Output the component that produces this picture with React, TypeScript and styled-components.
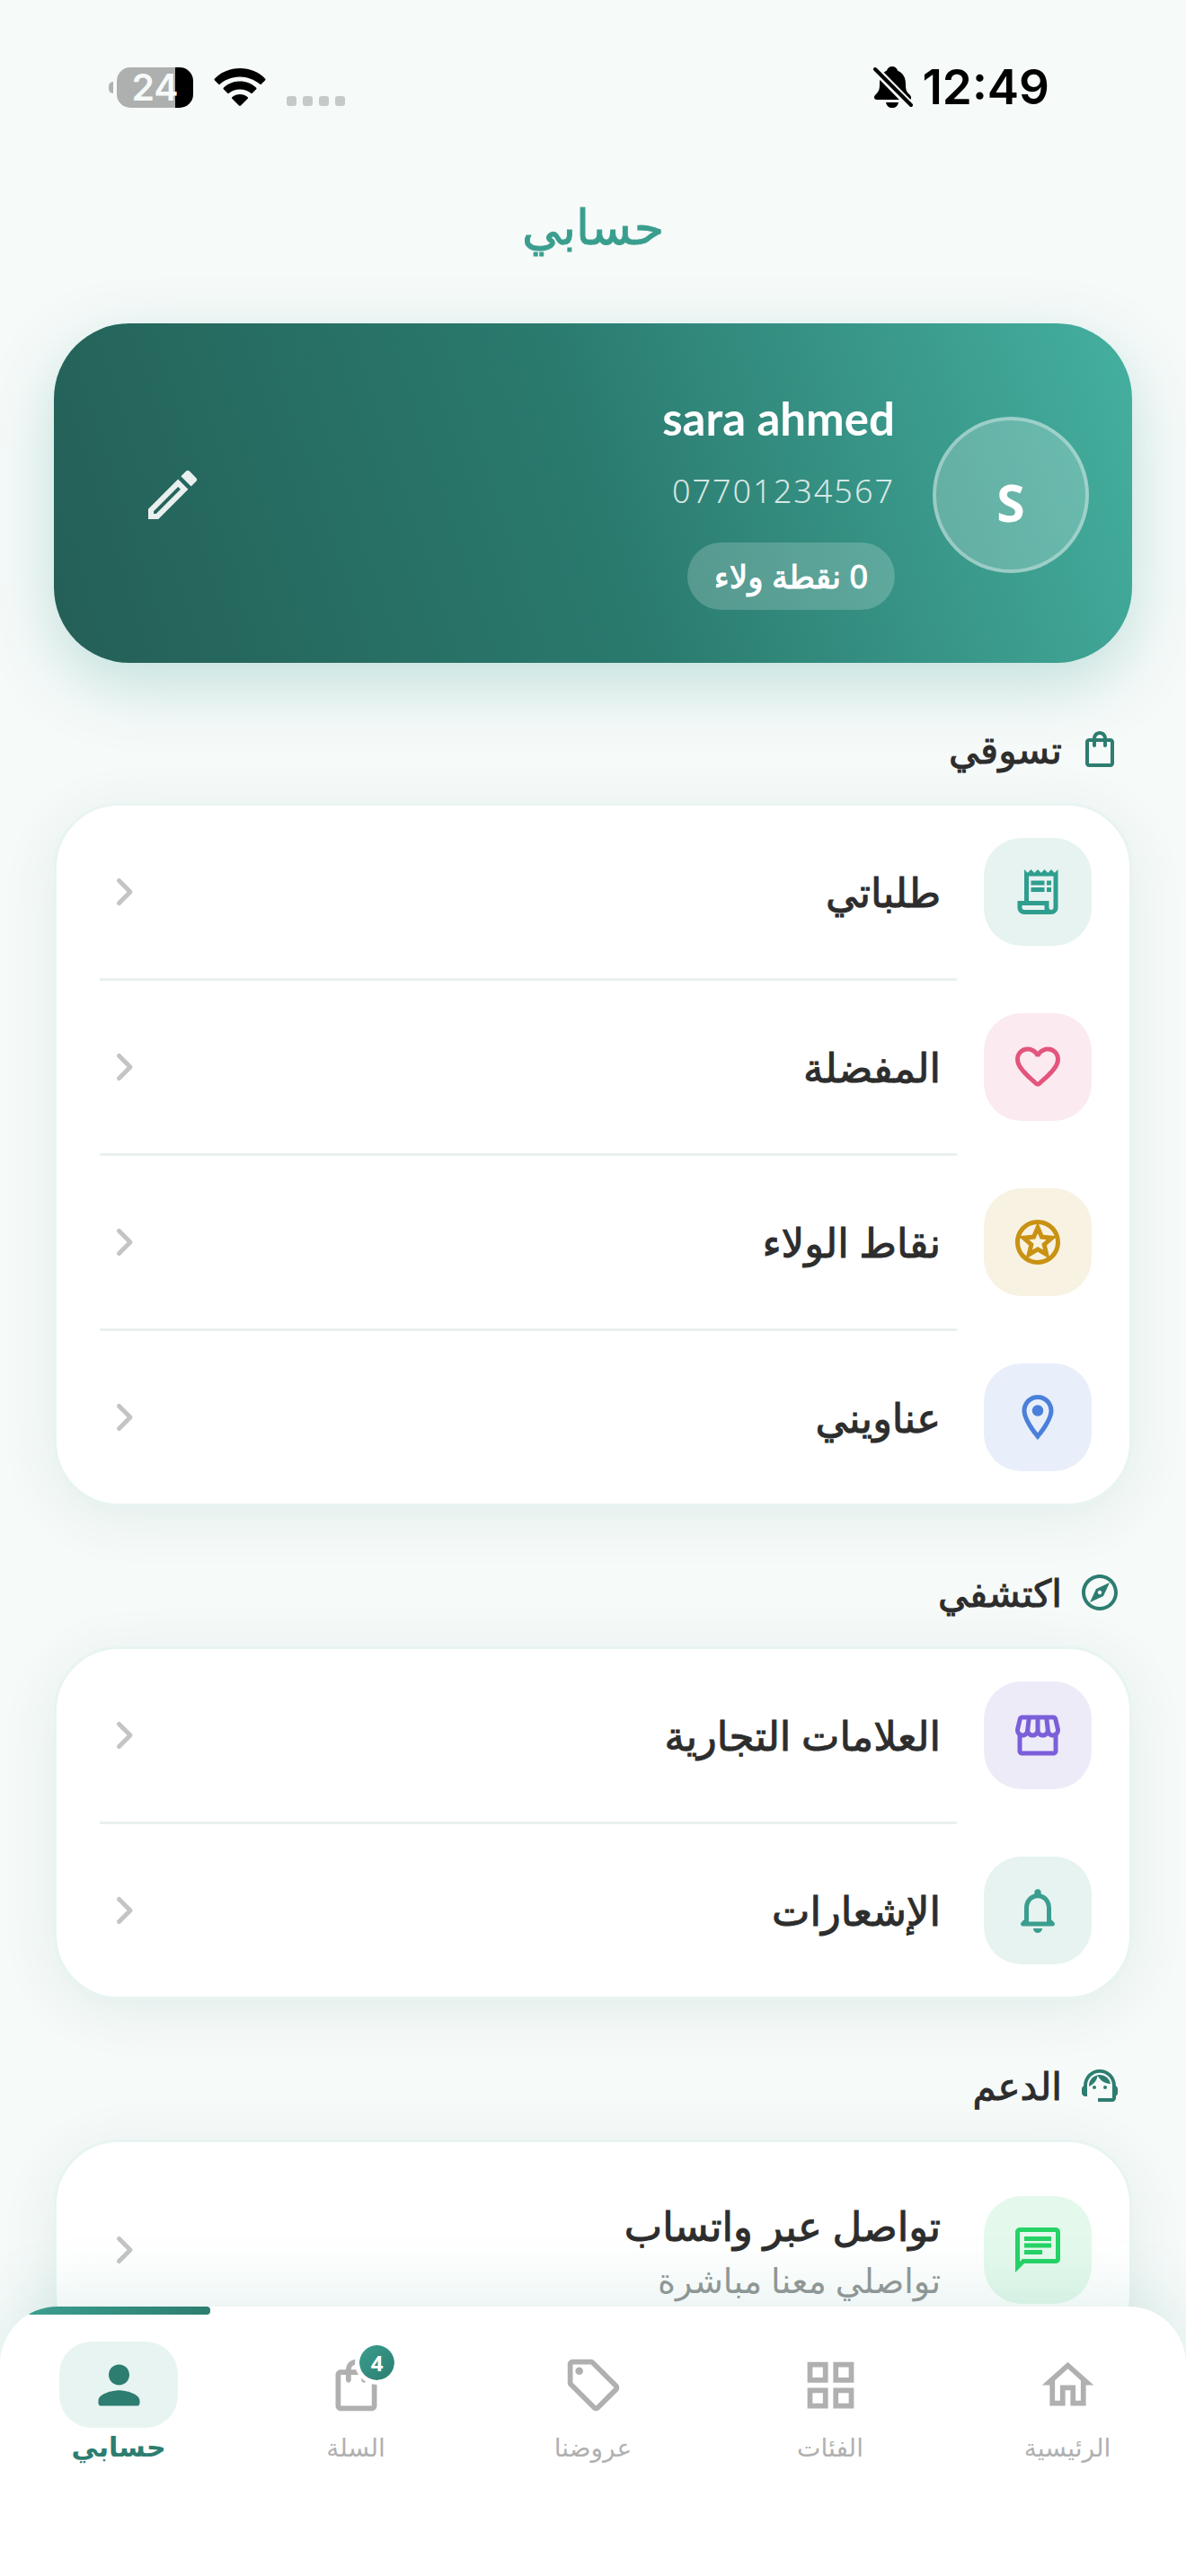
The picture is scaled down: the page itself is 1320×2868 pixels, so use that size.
import React from "react";
import styled, { createGlobalStyle } from "styled-components";
import {
  MdOutlineChat,
  MdOutlineGridView,
  MdOutlineHome,
  MdOutlineLocalOffer,
  MdOutlineModeEdit,
  MdOutlineReceiptLong,
  MdOutlineShoppingBag,
  MdOutlineStars,
  MdOutlineStorefront,
  MdSupportAgent,
} from "react-icons/md";

const GlobalStyle = createGlobalStyle`
  *, *::before, *::after {
    box-sizing: border-box;
  }

  body {
    background: #f6faf9;
    color: #2d2d2d;
    font-family: "Noto Sans", "DejaVu Sans", sans-serif;
    margin: 0;
  }

  button {
    background: none;
    border: none;
    color: inherit;
    cursor: pointer;
    font: inherit;
    padding: 0;
  }

  a {
    color: inherit;
    text-decoration: none;
  }

  svg {
    display: block;
    flex: none;
  }
`;

const Screen = styled.div`
  display: flex;
  flex-direction: column;
  height: 100vh;
  overflow: hidden;
`;

const StatusBar = styled.header`
  align-items: center;
  color: #000;
  direction: ltr;
  display: flex;
  flex: none;
  height: 194px;
  justify-content: space-between;
  padding: 0 152px 0 121px;
`;

const StatusGroup = styled.div<{ $gap: number }>`
  align-items: center;
  display: flex;
  gap: ${({ $gap }) => $gap}px;
`;

const Time = styled.span`
  font-family: Inter, sans-serif;
  font-size: 53px;
  font-weight: 600;
  line-height: 60px;
`;

const Battery = styled.div`
  align-items: center;
  display: flex;
  gap: 4px;
`;

const BatteryTip = styled.span`
  background: #b0b3b1;
  border-radius: 5px 0 0 5px;
  height: 13px;
  width: 5px;
`;

const BatteryLevel = styled.span`
  background: linear-gradient(to left, #000 20px, #adb0ae 20px);
  border-radius: 15px;
  color: #f6faf9;
  font-family: Inter, sans-serif;
  font-size: 41px;
  font-weight: 600;
  line-height: 45px;
  text-align: center;
  width: 85px;
`;

const PageTitle = styled.h1`
  -webkit-text-stroke: 1px;
  color: #3a9e8f;
  flex: none;
  font-size: 54px;
  font-weight: 500;
  line-height: 114px;
  margin: 0 0 52px;
  text-align: center;
`;

const Content = styled.main`
  display: flex;
  flex: 1;
  flex-direction: column;
  min-height: 0;
  padding: 0 60px;
`;

const ProfileCard = styled.section`
  align-items: center;
  background: linear-gradient(252deg, #45b0a0, #2a7a6e 50%, #245f56);
  border-radius: 84px;
  box-shadow: 0 24px 72px rgba(58, 158, 143, 0.28);
  color: #fff;
  display: flex;
  flex: none;
  gap: 42px;
  height: 378px;
  padding: 4px 48px 0;
`;

const Avatar = styled.div`
  align-items: center;
  background: rgba(255, 255, 255, 0.22);
  border: 4px solid rgba(255, 255, 255, 0.35);
  border-radius: 50%;
  display: flex;
  font-size: 57px;
  font-weight: 700;
  height: 174px;
  justify-content: center;
  line-height: 80px;
  padding-top: 16px;
  width: 174px;
`;

const ProfileInfo = styled.div`
  align-items: flex-start;
  display: flex;
  flex: 1;
  flex-direction: column;
`;

const ProfileName = styled.h2`
  font-family: Lato, sans-serif;
  font-size: 51px;
  font-weight: 700;
  line-height: 84px;
  margin: 0;
`;

const Phone = styled.span`
  direction: ltr;
  font-size: 36px;
  font-weight: 300;
  letter-spacing: 2px;
  line-height: 54px;
  margin: 12px 0 30px;
  opacity: 0.8;
`;

const Points = styled.span`
  -webkit-text-stroke: 1px;
  background: rgba(255, 255, 255, 0.2);
  border-radius: 38px;
  font-size: 36px;
  line-height: 75px;
  padding: 0 30px;
`;

const EditButton = styled.button`
  color: rgba(255, 255, 255, 0.9);
  padding: 48px;
`;

const SectionTitle = styled.h3`
  -webkit-text-stroke: 1px;
  align-items: center;
  display: flex;
  flex: none;
  font-size: 42px;
  font-weight: 500;
  gap: 18px;
  line-height: 84px;
  margin: 54px 12px 18px;

  svg {
    color: #2d7d70;
  }
`;

const Card = styled.ul`
  background: #fff;
  border: 3px solid #e8f4f2;
  border-radius: 72px;
  box-shadow: 0 12px 60px rgba(45, 125, 112, 0.1);
  flex: none;
  list-style: none;
  margin: 0;
  padding: 0;
`;

const CardItem = styled.li`
  & + &::before {
    background: #e8f1ee;
    content: "";
    display: block;
    height: 3px;
    margin: 0 192px 0 48px;
  }
`;

const RowLink = styled.a<{ $tall?: boolean }>`
  align-items: center;
  display: flex;
  gap: 48px;
  height: ${({ $tall }) => ($tall ? 240 : 192)}px;
  padding: 0 42px;
`;

const IconTile = styled.span<{ $color: string; $background: string }>`
  align-items: center;
  background: ${({ $background }) => $background};
  border-radius: 42px;
  color: ${({ $color }) => $color};
  display: flex;
  height: 120px;
  justify-content: center;
  width: 120px;
`;

const RowText = styled.span`
  display: flex;
  flex: 1;
  flex-direction: column;
`;

const RowTitle = styled.span`
  -webkit-text-stroke: 1px;
  font-size: 45px;
  line-height: 66px;
`;

const RowSubtitle = styled.span`
  color: #949796;
  font-size: 38px;
  line-height: 54px;
`;

const BottomNav = styled.nav`
  background: #fff;
  border-radius: 64px 64px 0 0;
  box-shadow: 0 -12px 72px rgba(58, 158, 143, 0.14);
  display: flex;
  flex: none;
  height: 300px;
  overflow: hidden;
  position: relative;
`;

const NavLink = styled.a<{ $active?: boolean }>`
  align-items: center;
  color: ${({ $active }) => ($active ? "#2d7d70" : "#b0b0b0")};
  display: flex;
  flex: 1;
  flex-direction: column;
  font-size: ${({ $active }) => ($active ? 30 : 28)}px;
  font-weight: ${({ $active }) => ($active ? 700 : 400)};
  line-height: 42px;
  padding-top: 39px;
  position: relative;
`;

const Indicator = styled.span`
  background: linear-gradient(to right, #3a9e8f, #2d7d70);
  border-radius: 4px;
  height: 9px;
  left: 30px;
  position: absolute;
  right: 30px;
  top: 0;
`;

const NavIcon = styled.span<{ $active?: boolean }>`
  align-items: center;
  background: ${({ $active }) => ($active ? "#e8f4f2" : "transparent")};
  border-radius: 36px;
  display: flex;
  height: 96px;
  justify-content: center;
  position: relative;
  width: 132px;
`;

const Badge = styled.span`
  background: linear-gradient(to bottom right, #3a9e8f, #2d7d70) padding-box;
  border: 5px solid #fff;
  border-radius: 50%;
  color: #fff;
  font-size: 24px;
  font-weight: 700;
  height: 49px;
  line-height: 40px;
  position: absolute;
  right: 18px;
  text-align: center;
  top: -1px;
  width: 49px;
`;

interface GlyphProps {
  size: number;
  children: React.ReactNode;
}

const Glyph = ({ size, children }: GlyphProps) => (
  <svg width={size} height={size} viewBox="0 0 24 24" fill="currentColor">
    {children}
  </svg>
);

const HeartIcon = () => (
  <Glyph size={60}>
    <path d="M19.66 3.99c-2.64-1.8-5.9-.96-7.66 1.1-1.76-2.06-5.02-2.91-7.66-1.1-1.4.96-2.28 2.58-2.34 4.29-.14 3.88 3.3 6.99 8.55 11.76l.1.09c.76.69 1.93.69 2.69-.01l.11-.1c5.25-4.76 8.68-7.87 8.55-11.75-.06-1.7-.94-3.32-2.34-4.28zM12.1 18.55l-.1.1-.1-.1C7.14 14.24 4 11.39 4 8.5 4 6.5 5.5 5 7.5 5c1.54 0 3.04.99 3.57 2.36h1.87C13.46 5.99 14.96 5 16.5 5c2 0 3.5 1.5 3.5 3.5 0 2.89-3.14 5.74-7.9 10.05z" />
  </Glyph>
);

const PinIcon = () => (
  <Glyph size={60}>
    <path d="M12 2C8.13 2 5 5.13 5 9c0 5.25 7 13 7 13s7-7.75 7-13c0-3.87-3.13-7-7-7zM7 9c0-2.76 2.24-5 5-5s5 2.24 5 5c0 2.88-2.88 7.19-5 9.88C9.92 16.21 7 11.85 7 9z" />
    <circle cx="12" cy="9" r="2.5" />
  </Glyph>
);

const BellIcon = () => (
  <Glyph size={60}>
    <path d="M19.29 17.29L18 16v-5c0-3.07-1.63-5.64-4.5-6.32V4c0-.83-.67-1.5-1.5-1.5s-1.5.67-1.5 1.5v.68C7.64 5.36 6 7.92 6 11v5l-1.29 1.29c-.63.63-.19 1.71.7 1.71h13.17c.9 0 1.34-1.08.71-1.71zM16 17H8v-6c0-2.48 1.51-4.5 4-4.5s4 2.02 4 4.5v6zm-4 5c1.1 0 2-.9 2-2h-4c0 1.1.89 2 2 2z" />
  </Glyph>
);

const CompassIcon = () => (
  <Glyph size={48}>
    <path d="M12 2C6.48 2 2 6.48 2 12s4.48 10 10 10 10-4.48 10-10S17.52 2 12 2zm0 18c-4.41 0-8-3.59-8-8s3.59-8 8-8 8 3.590 8 8-3.590 8-8 8zm-5.500-2.500l7.510-3.490L17.500 6.500 9.990 9.990 6.500 17.500zm5.500-6.600c.61 0 1.100.49 1.100 1.100s-.49 1.100-1.100 1.100-1.100-.49-1.100-1.100.49-1.100 1.100-1.100z" />
  </Glyph>
);

const PersonIcon = () => (
  <Glyph size={69}>
    <path d="M12 12c2.21 0 4-1.79 4-4s-1.79-4-4-4-4 1.79-4 4 1.79 4 4 4zm0 2c-2.67 0-8 1.34-8 4v1c0 .55.45 1 1 1h14c.55 0 1-.45 1-1v-1c0-2.66-5.33-4-8-4z" />
  </Glyph>
);

const Chevron = () => (
  <svg width="60" height="60" viewBox="0 0 60 60" fill="none" stroke="#c4c4c4" strokeWidth="5" strokeLinecap="round" strokeLinejoin="round">
    <path d="M27.5 17.5L40 30L27.5 42.5" />
  </svg>
);

const Wifi = () => (
  <svg width="58" height="42" viewBox="0 0 58 42">
    <path d="M29 0C40 0 50 4 57 11.5Q58 12.500 57 13.500L53 17.500Q52 18.500 51 17.500C45 12.500 37 9.500 29 9.500S13 12.500 7 17.500Q6 18.500 5 17.500L1 13.500Q0 12.500 1 11.500C8 4 18 0 29 0Z" />
    <path d="M29 14.500C36 14.500 42 17 47 21.500Q48 22.500 47 23.500L43 27.500Q42 28.500 41 27.500C37.500 24.800 33.500 23.500 29 23.500S20.500 24.800 17 27.500Q16 28.500 15 27.500L11 23.500Q10 22.500 11 21.500C16 17 22 14.500 29 14.500Z" />
    <path d="M29 29C32.500 29 35 30 37.500 32Q38.500 33 37.500 34L30 41.500Q29 42.300 28 41.500L20.500 34Q19.500 33 20.500 32C23 30 25.500 29 29 29Z" />
  </svg>
);

const SignalDots = () => (
  <svg width="66" height="42" viewBox="0 0 66 42" fill="#c5c9c7">
    {[0, 18, 36, 54].map((x) => (
      <rect key={x} x={x} y="31" width="11" height="11" rx="3" />
    ))}
  </svg>
);

const SilentBell = () => (
  <svg width="44" height="48" viewBox="0 0 44 48">
    <path d="M21 1C24 1 26 2.500 27 5.500C33 8.500 36 13 36 21C36 28 37 29 41 33C43 36 42 38 40 38H4C1 38 0 35 2 33C6 29 7 27 7 21C7 13 9 8.500 15 5.500C16 2.500 18 1 21 1Z" />
    <path d="M14 41H28C27 45 25 47 21 47S15 45 14 41Z" />
    <path d="M-1 1L44 47" stroke="#f6faf9" strokeWidth="9" />
    <path d="M2 4L42 44" stroke="#000" strokeWidth="4" strokeLinecap="round" />
  </svg>
);

interface MenuItem {
  title: string;
  subtitle?: string;
  icon: React.ReactNode;
  color: string;
  background: string;
}

interface MenuSection {
  title: string;
  icon: React.ReactNode;
  items: MenuItem[];
}

const sections: MenuSection[] = [
  {
    title: "تسوقي",
    icon: <MdOutlineShoppingBag size={48} />,
    items: [
      { title: "طلباتي", icon: <MdOutlineReceiptLong size={60} />, color: "#2f9e8f", background: "#e6f3f0" },
      { title: "المفضلة", icon: <HeartIcon />, color: "#e3557d", background: "#fbeaf0" },
      { title: "نقاط الولاء", icon: <MdOutlineStars size={60} />, color: "#c99213", background: "#f8f2e3" },
      { title: "عناويني", icon: <PinIcon />, color: "#4a80d9", background: "#e8eefa" },
    ],
  },
  {
    title: "اكتشفي",
    icon: <CompassIcon />,
    items: [
      { title: "العلامات التجارية", icon: <MdOutlineStorefront size={60} />, color: "#7b5fd9", background: "#eeebf9" },
      { title: "الإشعارات", icon: <BellIcon />, color: "#3a9e8f", background: "#e6f3f0" },
    ],
  },
  {
    title: "الدعم",
    icon: <MdSupportAgent size={48} />,
    items: [
      {
        title: "تواصل عبر واتساب",
        subtitle: "تواصلي معنا مباشرة",
        icon: <MdOutlineChat size={60} />,
        color: "#25d366",
        background: "#e4f9ec",
      },
    ],
  },
];

const tabs = [
  { label: "الرئيسية", icon: <MdOutlineHome size={69} /> },
  { label: "الفئات", icon: <MdOutlineGridView size={69} /> },
  { label: "عروضنا", icon: <MdOutlineLocalOffer size={69} /> },
  { label: "السلة", icon: <MdOutlineShoppingBag size={69} />, badge: 4 },
  { label: "حسابي", icon: <PersonIcon />, active: true },
];

const App: React.FunctionComponent = (): JSX.Element => (
  <Screen dir="rtl" lang="ar">
    <GlobalStyle />
    <StatusBar>
      <StatusGroup $gap={23}>
        <Battery>
          <BatteryTip />
          <BatteryLevel>24</BatteryLevel>
        </Battery>
        <Wifi />
        <SignalDots />
      </StatusGroup>
      <StatusGroup $gap={10}>
        <SilentBell />
        <Time>12:49</Time>
      </StatusGroup>
    </StatusBar>
    <PageTitle>حسابي</PageTitle>
    <Content>
      <ProfileCard>
        <Avatar>S</Avatar>
        <ProfileInfo>
          <ProfileName>sara ahmed</ProfileName>
          <Phone>07701234567</Phone>
          <Points>0 نقطة ولاء</Points>
        </ProfileInfo>
        <EditButton aria-label="تعديل">
          <MdOutlineModeEdit size={72} />
        </EditButton>
      </ProfileCard>
      {sections.map((section) => (
        <React.Fragment key={section.title}>
          <SectionTitle>
            {section.icon}
            {section.title}
          </SectionTitle>
          <Card>
            {section.items.map((item) => (
              <CardItem key={item.title}>
                <RowLink href="#" $tall={!!item.subtitle}>
                  <IconTile $color={item.color} $background={item.background}>
                    {item.icon}
                  </IconTile>
                  <RowText>
                    <RowTitle>{item.title}</RowTitle>
                    {item.subtitle && <RowSubtitle>{item.subtitle}</RowSubtitle>}
                  </RowText>
                  <Chevron />
                </RowLink>
              </CardItem>
            ))}
          </Card>
        </React.Fragment>
      ))}
    </Content>
    <BottomNav>
      {tabs.map(({ label, icon, badge, active }) => (
        <NavLink key={label} href="#" $active={active}>
          {active && <Indicator />}
          <NavIcon $active={active}>
            {icon}
            {badge && <Badge>{badge}</Badge>}
          </NavIcon>
          {label}
        </NavLink>
      ))}
    </BottomNav>
  </Screen>
);

export default App;
